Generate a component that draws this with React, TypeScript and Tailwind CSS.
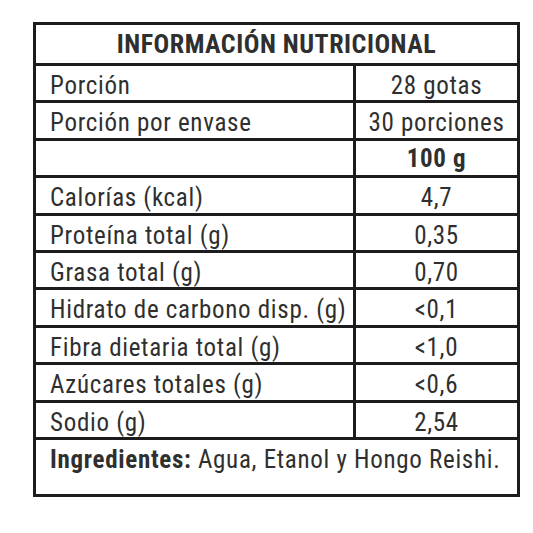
const rows: [string, string][] = [
  ["Calorías (kcal)", "4,7"],
  ["Proteína total (g)", "0,35"],
  ["Grasa total (g)", "0,70"],
  ["Hidrato de carbono disp. (g)", "<0,1"],
  ["Fibra dietaria total (g)", "<1,0"],
  ["Azúcares totales (g)", "<0,6"],
  ["Sodio (g)", "2,54"],
];

const cell = "border-[3px] border-[#1c1c1c] text-[25px] leading-none tracking-[0.7px] align-top";

export default function App() {
  return (
    <div className="w-[533px] h-[533px] bg-white pt-[22px] pl-[33px] font-['Roboto',sans-serif] [font-stretch:condensed] text-[#2f2f2f]">
      <table className="w-[487px] border-collapse border-[3px] border-[#1c1c1c]">
        <tbody>
          <tr>
            <td colSpan={2} className="h-[41px] border-[3px] border-[#1c1c1c] pt-[6px] align-top text-center text-[26px] font-bold leading-none tracking-[0.5px]">
              INFORMACIÓN NUTRICIONAL
            </td>
          </tr>
          <tr>
            <td className={`h-[37.4px] w-[320px] pl-[14px] pt-[7px] ${cell}`}>Porción</td>
            <td className={`text-center pt-[7px] ${cell}`}>28 gotas</td>
          </tr>
          <tr>
            <td className={`h-[37.4px] pl-[14px] pt-[7px] ${cell}`}>Porción por envase</td>
            <td className={`text-center pt-[7px] ${cell}`}>30 porciones</td>
          </tr>
          <tr>
            <td className={`h-[37.4px] ${cell}`}></td>
            <td className={`text-center font-bold pt-[5px] ${cell}`}>100 g</td>
          </tr>
          {rows.map(([label, value]) => (
            <tr key={label}>
              <td className={`h-[37.4px] pl-[14px] pt-[7px] ${cell}`}>{label}</td>
              <td className={`text-center pt-[7px] ${cell}`}>{value}</td>
            </tr>
          ))}
          <tr>
            <td colSpan={2} className={`h-[57px] pl-[14px] pt-[7px] ${cell}`}>
              <span className="font-bold">Ingredientes:</span> Agua, Etanol y Hongo Reishi.
            </td>
          </tr>
        </tbody>
      </table>
    </div>
  );
}
